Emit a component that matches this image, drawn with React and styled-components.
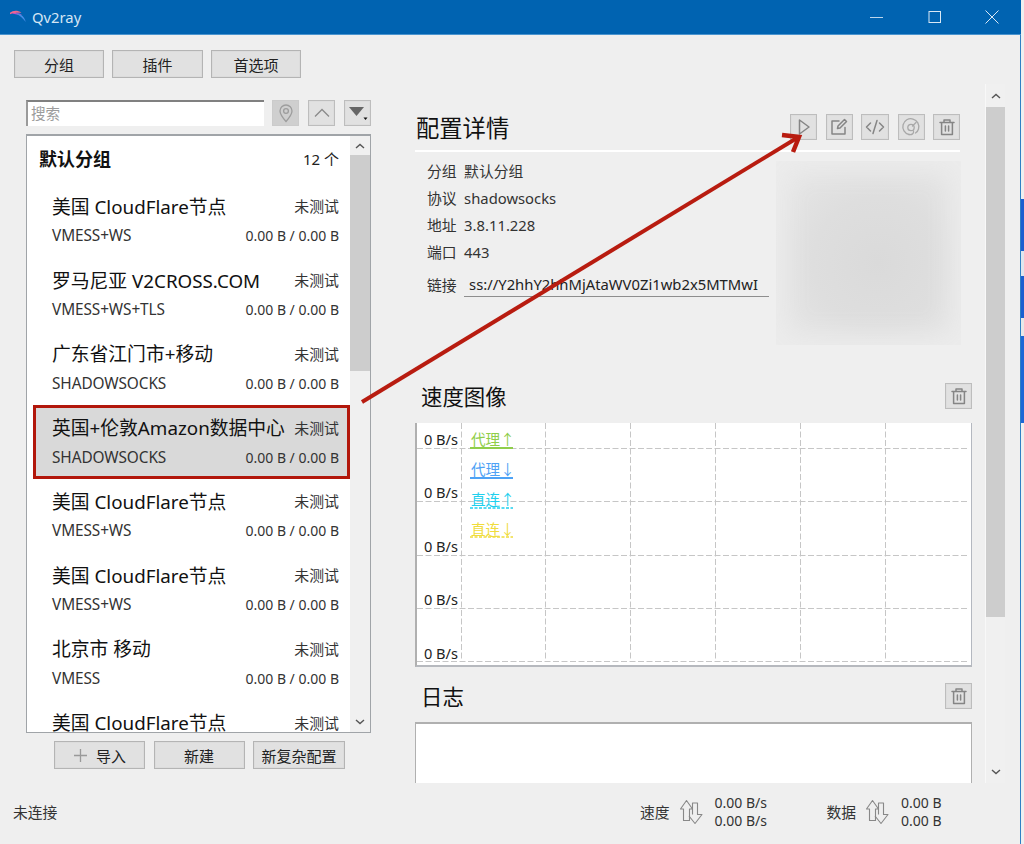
import React from 'react';
import styled, { createGlobalStyle } from 'styled-components';

const Global = createGlobalStyle`
  html, body { margin: 0; padding: 0; background: #efefef; }
  body { font-family: "Noto Sans", "Noto Sans CJK SC", sans-serif; color: #1a1a1a; }
  * { box-sizing: border-box; }
`;

const Page = styled.div`
  position: relative;
  width: 1024px;
  height: 844px;
  display: flex;
  overflow: hidden;
`;
const Win = styled.div`
  width: 1021px;
  height: 844px;
  display: flex;
  flex-direction: column;
  border-right: 1px solid #2f7fc4;
  background: #efefef;
`;
const Strip = styled.div`
  width: 3px;
  display: flex;
  flex-direction: column;
  background: #efefef;
`;
const StripPart = styled.div`
  height: ${p => p.$h}px;
  background: ${p => p.$c};
`;
const TitleBar = styled.div`
  height: 35px;
  flex: none;
  display: flex;
  align-items: center;
  background: #0063b1;
  border-bottom: 1px solid #4a94cf;
  margin-right: -1px;
`;
const Logo = styled.svg`
  width: 16px;
  height: 13px;
  margin: 0 6px 2px 10px;
`;
const AppName = styled.span`
  font-size: 14.8px;
  color: #d5e6f4;
  flex: 1;
`;
const WinBtn = styled.svg`
  width: 14px;
  height: 14px;
  margin-left: ${p => p.$ml}px;
  margin-right: ${p => p.$mr || 0}px;
`;
const TopBar = styled.div`
  flex: none;
  display: flex;
  gap: 8px;
  padding: 15px 0 6px 14px;
`;
const Btn = styled.button`
  width: ${p => p.$w || 91}px;
  height: 28px;
  padding: 0;
  display: flex;
  align-items: center;
  justify-content: center;
  gap: 8px;
  background: #e1e1e1;
  border: 1px solid #b4b4b4;
  box-shadow: inset 0 0 0 1px #dcdcdc;
  font: inherit;
  font-size: 15px;
  color: #222;
`;
const Main = styled.div`
  flex: 1;
  min-height: 0;
  display: flex;
`;
const Left = styled.div`
  width: 345px;
  margin-left: 26px;
  flex: none;
  padding-top: 16px;
  display: flex;
  flex-direction: column;
`;
const SearchRow = styled.div`
  display: flex;
  height: 26px;
`;
const Search = styled.div`
  width: 238px;
  height: 26px;
  background: #fff;
  border-top: 2px solid #808080;
  border-left: 2px solid #9a9a9a;
  padding-left: 3px;
  font-size: 14.6px;
  line-height: 23px;
  color: #9c9c9c;
`;
const IconBtn = styled.div`
  width: ${p => p.$w || 27}px;
  height: ${p => p.$h || 26}px;
  margin-left: ${p => p.$ml || 0}px;
  flex: none;
  display: flex;
  align-items: center;
  justify-content: center;
  background: ${p => p.$off ? '#cfcfcf' : '#e1e1e1'};
  border: 1px solid ${p => p.$off ? '#cbcbcb' : '#bdbdbd'};
  box-shadow: inset 0 0 0 1px ${p => p.$off ? '#cfcfcf' : '#dddddd'};
`;
const ListBox = styled.div`
  margin-top: 8px;
  height: 599px;
  display: flex;
  background: #fff;
  border: 1px solid #a0a4a8;
  border-top-width: 2px;
  overflow: hidden;
`;
const ListBody = styled.div`
  flex: 1;
  min-width: 0;
  overflow: hidden;
`;
const GroupHead = styled.div`
  height: 47.75px;
  padding: 11px 11px 0 12px;
  display: flex;
  justify-content: space-between;
  align-items: flex-start;
  line-height: 24px;
`;
const GroupName = styled.span`
  font-size: 18px;
  font-weight: 700;
  color: #111;
`;
const GroupCount = styled.span`
  font-size: 15px;
  color: #222;
`;
const Item = styled.div`
  height: 73.75px;
  margin-left: 6px;
  padding: 9px 11px 0 19px;
  background: ${p => p.$sel ? '#d9d9d9' : '#fff'};
  outline: ${p => p.$sel ? '3px solid #b2170b' : 'none'};
  outline-offset: -3px;
`;
const ItemRow = styled.div`
  display: flex;
  justify-content: space-between;
  align-items: center;
  height: ${p => p.$h}px;
  margin-bottom: ${p => p.$mb || 0}px;
  white-space: nowrap;
`;
const ItemName = styled.span`
  font-size: 18.8px;
  color: #111;
`;
const Untested = styled.span`
  font-size: 14.9px;
  color: #333;
`;
const TypeLabel = styled.span`
  font-size: 15.4px;
  letter-spacing: -0.1px;
  color: #333;
`;
const Traffic = styled.span`
  font-size: 14px;
  color: #333;
`;
const SideBar = styled.div`
  width: ${p => p.$w}px;
  flex: none;
  display: flex;
  flex-direction: column;
  background: #f0f0f0;
  margin-left: ${p => p.$ml || 0}px;
  box-shadow: ${p => p.$edge ? '-1px 0 0 #f8f8f8' : 'none'};
`;
const Arrow = styled.div`
  height: ${p => p.$h}px;
  flex: none;
  display: flex;
  align-items: center;
  justify-content: center;
`;
const Thumb = styled.div`
  height: ${p => p.$h}px;
  flex: none;
  background: #cdcdcd;
`;
const Spacer = styled.div`
  flex: 1;
`;
const BtnRow = styled.div`
  display: flex;
  gap: 8.5px;
  padding-left: 28px;
  margin-top: 8px;
`;
const Right = styled.div`
  width: 557px;
  flex: none;
  margin-left: 44px;
  padding-top: 30px;
  overflow: hidden;
`;
const CfgHead = styled.div`
  width: 545px;
  height: 38px;
  padding-left: 1px;
  display: flex;
  align-items: flex-start;
  justify-content: space-between;
  border-bottom: 2px solid #fff;
`;
const CfgTitle = styled.div`
  font-size: 23.3px;
  line-height: 28px;
  color: #111;
`;
const IconGroup = styled.div`
  display: flex;
  gap: 8.5px;
`;
const Detail = styled.div`
  width: 546px;
  display: flex;
  justify-content: space-between;
  align-items: flex-start;
  padding: 5px 0 0 12px;
`;
const Fields = styled.div`
  display: flex;
  flex-direction: column;
`;
const Field = styled.div`
  height: 27px;
  display: flex;
  align-items: center;
  gap: 7.5px;
  font-size: 14.8px;
  color: #333;
`;
const LinkField = styled(Field)`
  margin-top: 6px;
  height: 26px;
`;
const LinkBox = styled.div`
  width: 305px;
  height: 25px;
  margin-top: 1px;
  padding-left: 5px;
  overflow: hidden;
  white-space: nowrap;
  line-height: 25px;
  border-bottom: 1px solid #8e8e8e;
  color: #222;
`;
const Blurred = styled.div`
  width: 185px;
  height: 184px;
  margin-top: 4px;
  background: radial-gradient(circle at 55% 55%, #dadada 0, #dedede 45%, #e5e5e5 80%, #e9e9e9 100%);
  box-shadow: inset 0 0 26px 10px #ececec;
`;
const SecHead = styled.div`
  height: 25px;
  margin-top: ${p => p.$mt}px;
  padding-left: 6px;
  display: flex;
  align-items: center;
  justify-content: space-between;
`;
const SecTitle = styled.div`
  font-size: 21.4px;
  color: #111;
`;
const Chart = styled.div`
  height: 244px;
  margin-top: 15px;
  background: #fff;
  border-left: 2px solid #b0b0b0;
  border-right: 1px solid #b4b8c0;
  border-bottom: 2px solid #b6b9be;
`;
const ChartSvg = styled.svg`
  display: block;
  width: 554px;
  height: 242px;
  font-family: "Noto Sans", "Noto Sans CJK SC", sans-serif;
  font-size: 14.6px;
`;
const LogBox = styled.div`
  height: 100px;
  margin-top: 14px;
  background: #fff;
  border: 1px solid #b0b0b0;
  border-top-width: 2px;
`;
const Status = styled.div`
  height: 61px;
  flex: none;
  display: flex;
  align-items: center;
  padding: 0 0 4px 13px;
  font-size: 14.8px;
  color: #333;
`;
const StatLabel = styled.span`
  margin-left: ${p => p.$ml}px;
`;
const StatIcon = styled.svg`
  width: 24px;
  height: 26px;
  margin-left: 10px;
`;
const StatVals = styled.div`
  margin-left: ${p => p.$ml}px;
  display: flex;
  flex-direction: column;
  font-size: 14px;
  line-height: 18px;
`;
const Overlay = styled.svg`
  position: absolute;
  left: 0;
  top: 0;
  width: 1024px;
  height: 844px;
  pointer-events: none;
`;

const Ic = ({ children, s = 20 }) => (
  <svg width={s} height={s} viewBox="0 0 20 20" fill="none" stroke="#858585" strokeWidth="1.5" strokeLinecap="round" strokeLinejoin="round">{children}</svg>
);
const Trash = () => (
  <Ic><path d="M3 5.5h14M7 5.5V3h6v2.5M4.6 5.5v12h10.8v-12M8.4 9v5M11.6 9v5" /></Ic>
);
const Chev = ({ up, c = '#555' }) => (
  <svg width="10" height="6" viewBox="0 0 10 6" fill="none" stroke={c} strokeWidth="1.4"><path d={up ? 'M1 5l4-3.6L9 5' : 'M1 1l4 3.6L9 1'} /></svg>
);
const UpDown = () => (
  <StatIcon viewBox="0 0 24 26" fill="none" stroke="#888" strokeWidth="1.1" strokeLinejoin="round">
    <path d="M.5 10L6.500 1.500 12.500 10H9.500V21.500H3.500V10z" />
    <path d="M12.500 15.500V4H17.500V15.500H22L15 24.500 9 17" />
  </StatIcon>
);

const items = [
  ['美国 CloudFlare节点', 'VMESS+WS'],
  ['罗马尼亚 V2CROSS.COM', 'VMESS+WS+TLS'],
  ['广东省江门市+移动', 'SHADOWSOCKS'],
  ['英国+伦敦Amazon数据中心', 'SHADOWSOCKS', true],
  ['美国 CloudFlare节点', 'VMESS+WS'],
  ['美国 CloudFlare节点', 'VMESS+WS'],
  ['北京市 移动', 'VMESS'],
  ['美国 CloudFlare节点', null],
];

const hLines = [25, 78, 132, 185, 238];
const vLines = [44, 128, 213, 298, 383, 468];
const legend = [
  ['代理↑', 17, '#8fce4a', 25, ''],
  ['代理↓', 47, '#4ea2f5', 55, ''],
  ['直连↑', 77, '#1fd0ee', 85, '3 1.5'],
  ['直连↓', 107, '#f0dc3c', 114, '3 1.5'],
];

export default function App() {
  return (
    <Page>
      <Global />
      <Win>
        <TitleBar>
          <Logo viewBox="0 0 16 13" fill="none">
            <path d="M0 2.800C3 .3 7.500 0 11.500 2.800 7.500 2.400 3.500 2.800 0 4.200z" fill="#f0668e" />
            <path d="M2 3.400C6 2.400 10 3 12 5 8.500 4.400 5 4.200 2 3.400z" fill="#c04fc8" />
            <path d="M6 3.400C10.500 3.200 14.500 6.500 15.800 12 12.500 8 10 5.400 6 3.400z" fill="#4a8fe8" />
          </Logo>
          <AppName>Qv2ray</AppName>
          <WinBtn viewBox="0 0 14 14" $ml={0} stroke="#bcd6ec" fill="none"><path d="M0 7.500h13" /></WinBtn>
          <WinBtn viewBox="0 0 14 14" $ml={44} stroke="#d8e8f5" fill="none"><rect x="1" y="1.500" width="11.500" height="11" /></WinBtn>
          <WinBtn viewBox="0 0 14 14" $ml={43} $mr={22} stroke="#d8e8f5" fill="none"><path d="M.5.500l13 13M13.500.500l-13 13" /></WinBtn>
        </TitleBar>
        <TopBar>
          <Btn $w={90}>分组</Btn>
          <Btn $w={91}>插件</Btn>
          <Btn $w={90}>首选项</Btn>
        </TopBar>
        <Main>
          <Left>
            <SearchRow>
              <Search>搜索</Search>
              <IconBtn $off $ml={8}>
                <svg width="16" height="20" viewBox="0 0 16 20" fill="none" stroke="#9d9d9d" strokeWidth="1.300"><path d="M8 18.500C4.500 14.500 2 11.500 2 8a6 6 0 0 1 12 0c0 3.500-2.500 6.500-6 10.500z" /><circle cx="8" cy="8" r="2.400" /></svg>
              </IconBtn>
              <IconBtn $ml={9}>
                <svg width="16" height="10" viewBox="0 0 16 10" fill="none" stroke="#8a8a8a" strokeWidth="1.300"><path d="M1 8.500l7-7 7 7" /></svg>
              </IconBtn>
              <IconBtn $ml={9}>
                <svg width="22" height="16" viewBox="0 0 22 16"><path d="M2 2h15l-7.500 9z" fill="#666" /><path d="M16.500 12.500h4l-2 2.500z" fill="#111" /></svg>
              </IconBtn>
            </SearchRow>
            <ListBox>
              <ListBody>
                <GroupHead>
                  <GroupName>默认分组</GroupName>
                  <GroupCount>12 个</GroupCount>
                </GroupHead>
                {items.map(([name, type, sel], i) => (
                  <Item key={i} $sel={sel}>
                    <ItemRow $h={26} $mb={5}>
                      <ItemName>{name}</ItemName>
                      <Untested>未测试</Untested>
                    </ItemRow>
                    {type && (
                      <ItemRow $h={24}>
                        <TypeLabel>{type}</TypeLabel>
                        <Traffic>0.00 B / 0.00 B</Traffic>
                      </ItemRow>
                    )}
                  </Item>
                ))}
              </ListBody>
              <SideBar $w={20}>
                <Arrow $h={19}><Chev up /></Arrow>
                <Thumb $h={216} />
                <Spacer />
                <Arrow $h={20}><Chev /></Arrow>
              </SideBar>
            </ListBox>
            <BtnRow>
              <Btn $w={91}>
                <svg width="15" height="15" viewBox="0 0 15 15" stroke="#999" strokeWidth="1.300"><path d="M7.500 1v13M1 7.500h13" /></svg>
                导入
              </Btn>
              <Btn $w={91}>新建</Btn>
              <Btn $w={92}>新复杂配置</Btn>
            </BtnRow>
          </Left>
          <Right>
            <CfgHead>
              <CfgTitle>配置详情</CfgTitle>
              <IconGroup>
                <IconBtn>
                  <Ic><path d="M5.500 3l9.500 7-9.500 7z" /></Ic>
                </IconBtn>
                <IconBtn>
                  <Ic><path d="M16 10.500V17H3V4h7M15.500 2.500l2 2L11 11l-2.500.5L9 9z" /></Ic>
                </IconBtn>
                <IconBtn $w={28}>
                  <Ic><path d="M5.500 6L1.500 10l4 4M14.500 6l4 4-4 4M12 3.500L8 16.500" /></Ic>
                </IconBtn>
                <IconBtn>
                  <svg width="20" height="20" viewBox="0 0 20 20" fill="none" stroke="#a8a8a8" strokeWidth="1.300" strokeLinecap="round"><path d="M8 17.500A8 8 0 1 1 17.500 12c-.5 2-1.500 3-3 4" /><path d="M8 17.500c3 .5 5-1 4.500-3.500" /><circle cx="10" cy="10.500" r="3.200" /><path d="M11.500 9L15 5.500" /></svg>
                </IconBtn>
                <IconBtn>
                  <Trash />
                </IconBtn>
              </IconGroup>
            </CfgHead>
            <Detail>
              <Fields>
                <Field>分组<span>默认分组</span></Field>
                <Field>协议<span>shadowsocks</span></Field>
                <Field>地址<span>3.8.11.228</span></Field>
                <Field>端口<span>443</span></Field>
                <LinkField>链接<LinkBox>ss://Y2hhY2hhMjAtaWV0Zi1wb2x5MTMwI</LinkBox></LinkField>
              </Fields>
              <Blurred />
            </Detail>
            <SecHead $mt={38}>
              <SecTitle>速度图像</SecTitle>
              <IconBtn><Trash /></IconBtn>
            </SecHead>
            <Chart>
              <ChartSvg viewBox="0 0 554 242">
                {hLines.map(y => <line key={y} x1="0" x2="550" y1={y + 0.5} y2={y + 0.5} stroke="#c6c6c6" strokeDasharray="6 2.500" />)}
                {vLines.map(x => <line key={x} x1={x + 0.5} x2={x + 0.5} y1="0" y2="238" stroke="#c6c6c6" strokeDasharray="6 2.500" />)}
                {[22, 75, 129, 182, 236].map(y => <text key={y} x="41" y={y} textAnchor="end" fill="#222">0 B/s</text>)}
                {legend.map(([t, y, c, u, d]) => (
                  <g key={t}>
                    <text x="54" y={y + 5} fill={c}>{t}</text>
                    <line x1="53" x2="96" y1={u} y2={u} stroke={c} strokeWidth={d ? 1.500 : 2} strokeDasharray={d} />
                  </g>
                ))}
              </ChartSvg>
            </Chart>
            <SecHead $mt={16}>
              <SecTitle>日志</SecTitle>
              <IconBtn><Trash /></IconBtn>
            </SecHead>
            <LogBox />
          </Right>
          <SideBar $w={19} $ml={14} $edge>
            <Arrow $h={23}><Chev up /></Arrow>
            <Thumb $h={510} />
            <Spacer />
            <Arrow $h={23}><Chev /></Arrow>
          </SideBar>
        </Main>
        <Status>
          <span>未连接</span>
          <StatLabel $ml={582.500}>速度</StatLabel>
          <UpDown />
          <StatVals $ml={11}><span>0.00 B/s</span><span>0.00 B/s</span></StatVals>
          <StatLabel $ml={59.500}>数据</StatLabel>
          <UpDown />
          <StatVals $ml={11}><span>0.00 B</span><span>0.00 B</span></StatVals>
        </Status>
      </Win>
      <Strip>
        <StripPart $h={199} $c="#efefef" />
        <StripPart $h={52} $c="#1a5fd0" />
        <StripPart $h={25} $c="#dfe6ee" />
        <StripPart $h={42} $c="#1a5fd0" />
        <StripPart $h={18} $c="#e8e8e8" />
        <StripPart $h={87} $c="#1c68d6" />
      </Strip>
      <Overlay viewBox="0 0 1024 844" fill="none" stroke="#b81c10" strokeWidth="4">
        <path d="M362 402L797 138" />
        <path d="M782 135L799 137L793 152" strokeWidth="4.500" />
      </Overlay>
    </Page>
  );
}
